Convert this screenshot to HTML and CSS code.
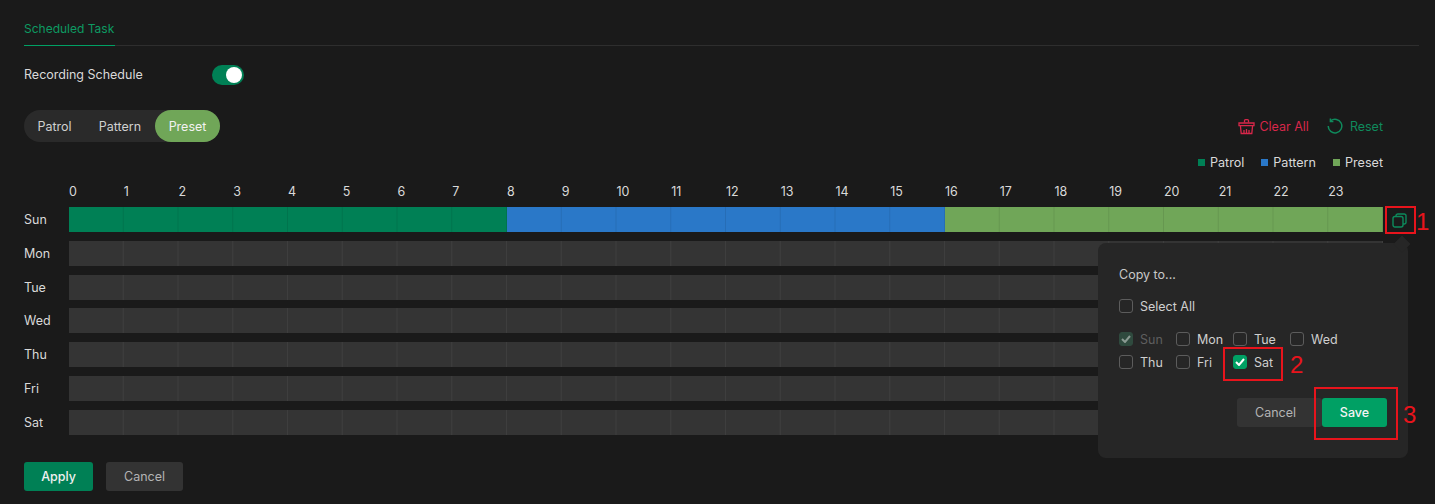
FILE: index.html
```html
<!DOCTYPE html>
<html lang="en">
<head>
  <meta charset="UTF-8" />
  <title>Scheduled Task</title>
  <link rel="stylesheet" href="styles.css">
</head>
<body>
  <div class="page">
    <div class="tabs"><span class="tab-active">Scheduled Task</span></div>

    <div class="switch-row">
      <span class="switch-label">Recording Schedule</span>
      <span class="switch"><span class="switch-knob"></span></span>
    </div>

    <div class="toolbar">
      <div class="mode-group">
        <span class="mode">Patrol</span>
        <span class="mode">Pattern</span>
        <span class="mode mode-active">Preset</span>
      </div>
      <div class="actions">
        <span class="action action-clear">
          <svg width="17" height="17" viewBox="0 0 17 17" fill="none" stroke="currentColor" stroke-width="1.3">
            <path d="M6.5 4.5V2.6a1 1 0 0 1 1-1h2a1 1 0 0 1 1 1v1.9"/>
            <path d="M1 5h15v2.6H1z"/>
            <path d="M2.4 7.6l.8 7.9h10.6l.8-7.9"/>
            <path d="M6 12v3.5M8.5 11v4.5M11 12v3.5"/>
          </svg>
          Clear All
        </span>
        <span class="action action-reset">
          <svg width="16" height="16" viewBox="0 0 16 16" fill="none" stroke="currentColor" stroke-width="1.5">
            <path d="M3.6 2.9A6.8 6.8 0 1 1 1.2 8"/>
            <path d="M3.4 .4v3h3"/>
          </svg>
          Reset
        </span>
      </div>
    </div>

    <div class="legend">
      <span class="legend-item"><i class="dot patrol"></i>Patrol</span>
      <span class="legend-item"><i class="dot pattern"></i>Pattern</span>
      <span class="legend-item"><i class="dot preset"></i>Preset</span>
    </div>

    <div class="schedule">
      <div class="hours">
        <span>0</span><span>1</span><span>2</span><span>3</span><span>4</span><span>5</span>
        <span>6</span><span>7</span><span>8</span><span>9</span><span>10</span><span>11</span>
        <span>12</span><span>13</span><span>14</span><span>15</span><span>16</span><span>17</span>
        <span>18</span><span>19</span><span>20</span><span>21</span><span>22</span><span>23</span>
      </div>
      <div class="day-row">
        <span class="day">Sun</span>
        <div class="track track-filled">
          <div class="seg patrol"></div>
          <div class="seg pattern"></div>
          <div class="seg preset"></div>
        </div>
      </div>
      <div class="day-row"><span class="day">Mon</span><div class="track"></div></div>
      <div class="day-row"><span class="day">Tue</span><div class="track"></div></div>
      <div class="day-row"><span class="day">Wed</span><div class="track"></div></div>
      <div class="day-row"><span class="day">Thu</span><div class="track"></div></div>
      <div class="day-row"><span class="day">Fri</span><div class="track"></div></div>
      <div class="day-row"><span class="day">Sat</span><div class="track"></div></div>
    </div>

    <div class="footer">
      <button class="btn btn-apply">Apply</button>
      <button class="btn btn-cancel">Cancel</button>
    </div>
  </div>

  <!-- copy icon + its red callout -->
  <span class="copy-icon">
    <svg width="15" height="15" viewBox="0 0 15 15" fill="none" stroke="currentColor" stroke-width="1.4">
      <rect x="1" y="3.5" width="10" height="10.5" rx="2"/>
      <path d="M4 3.5V2.8A1.8 1.8 0 0 1 5.8 1h6.4A1.8 1.8 0 0 1 14 2.8v6.4a1.8 1.8 0 0 1-1.8 1.8H11"/>
    </svg>
  </span>
  <span class="mark mark-1"></span>
  <span class="mark-num num-1">1</span>

  <div class="popover">
    <span class="popover-arrow"></span>
    <p class="popover-title">Copy to...</p>
    <label class="check check-all"><i class="box"></i>Select All</label>
    <div class="check-grid">
      <label class="check check-disabled"><i class="box box-disabled"><svg width="10" height="8" viewBox="0 0 10 8"><path d="M1 4l3 3 5-6" fill="none" stroke="currentColor" stroke-width="2"/></svg></i>Sun</label>
      <label class="check"><i class="box"></i>Mon</label>
      <label class="check"><i class="box"></i>Tue</label>
      <label class="check"><i class="box"></i>Wed</label>
      <label class="check"><i class="box"></i>Thu</label>
      <label class="check"><i class="box"></i>Fri</label>
      <label class="check"><i class="box box-on"><svg width="10" height="8" viewBox="0 0 10 8"><path d="M1 4l3 3 5-6" fill="none" stroke="currentColor" stroke-width="2"/></svg></i>Sat</label>
    </div>
    <div class="popover-btns">
      <button class="btn btn-pop-cancel">Cancel</button>
      <button class="btn btn-save">Save</button>
    </div>
  </div>
  <span class="mark mark-2"></span>
  <span class="mark-num num-2">2</span>
  <span class="mark mark-3"></span>
  <span class="mark-num num-3">3</span>
</body>
</html>
```

FILE: styles.css
```css
:root {
  --bg: #1a1a1a;
  --panel: #262626;
  --green: #00a064;
  --patrol: #008055;
  --pattern: #2a78c8;
  --preset: #70a658;
  --text: #d9d9d9;
  --red: #e8141c;
}

* {
  box-sizing: border-box;
}

html, body {
  height: 100%;
}

body {
  margin: 0;
  background-color: var(--bg);
  color: var(--text);
  font-family: Inter, "Open Sans", sans-serif;
  font-size: 12.5px;
  overflow: hidden;
  position: relative;
}

.page {
  padding: 0 16px 0 24px;
}

.tabs {
  height: 46px;
  padding-top: 21px;
  border-bottom: 1px solid #2e2e2e;
  display: flex;
}

.tab-active {
  color: #0d9a62;
  font-size: 12px;
  height: 25px;
  border-bottom: 1px solid var(--green);
  margin-bottom: -1px;
  width: 91px;
  white-space: nowrap;
}

.switch-row {
  display: flex;
  align-items: center;
  height: 20px;
  margin-top: 19px;
}

.switch-label {
  width: 188px;
  padding-bottom: 2px;
}

.switch {
  width: 32px;
  height: 20px;
  border-radius: 10px;
  background-color: var(--patrol);
  display: flex;
  align-items: center;
  justify-content: flex-end;
  padding-right: 2px;
}

.switch-knob {
  width: 16px;
  height: 16px;
  border-radius: 50%;
  background-color: #fff;
}

.toolbar {
  display: flex;
  justify-content: space-between;
  align-items: center;
  margin-top: 25px;
  padding-right: 36px;
}

.mode-group {
  display: flex;
  height: 32px;
  width: 196px;
  border-radius: 16px;
  background-color: #2a2a2a;
}

.mode {
  display: flex;
  align-items: center;
  justify-content: center;
  color: #d0d0d0;
}

.mode:nth-child(1) {
  width: 61px;
}

.mode:nth-child(2) {
  width: 70px;
}

.mode-active {
  width: 65px;
  border-radius: 16px;
  background-color: var(--preset);
  color: #f2f2f2;
}

.actions {
  display: flex;
  gap: 18px;
}

.action {
  display: flex;
  align-items: center;
}

.action-clear {
  color: #d8274a;
  gap: 4px;
}

.action-reset {
  color: #0f8a5c;
  gap: 7px;
}

.legend {
  display: flex;
  justify-content: flex-end;
  gap: 17px;
  margin-top: 13px;
  padding-right: 36px;
  height: 14px;
  align-items: center;
  font-size: 12.6px;
}

.legend-item {
  display: flex;
  align-items: center;
  gap: 5px;
}

.dot {
  width: 7px;
  height: 7px;
}

.patrol {
  background-color: var(--patrol);
}

.pattern {
  background-color: var(--pattern);
}

.preset {
  background-color: var(--preset);
}

.schedule {
  margin-top: 15px;
  padding-left: 45px;
  padding-right: 36px;
}

.hours {
  display: grid;
  grid-template-columns: repeat(24, 1fr);
  height: 16px;
  line-height: 16px;
  margin-bottom: 7px;
}

.day-row {
  display: flex;
  height: 25px;
  margin-bottom: 8.8px;
  position: relative;
}

.day {
  position: absolute;
  left: -45px;
  top: 5px;
}

.track {
  position: relative;
  flex: 1;
  display: flex;
  background-color: #343434;
}

/* hour lines, one per cell */
.track::after {
  content: "";
  position: absolute;
  inset: 0;
  background-image: linear-gradient(to left, rgba(255, 255, 255, 0.05) 1px, transparent 1px);
  background-size: calc(100% / 24) 100%;
}

.track-filled::after {
  background-image: linear-gradient(to left, rgba(0, 0, 0, 0.09) 1px, transparent 1px);
}

.seg {
  flex: 1;
}

.footer {
  display: flex;
  gap: 13px;
  margin-top: 27px;
}

.btn {
  height: 29px;
  border: none;
  border-radius: 3px;
  font-family: inherit;
  font-size: 12.5px;
  padding: 0;
}

.btn-apply {
  width: 69px;
  background-color: var(--patrol);
  color: #f0f0f0;
  font-weight: 500;
}

.btn-cancel {
  width: 77px;
  background-color: #333;
  color: #b4b4b4;
}

.copy-icon {
  position: absolute;
  left: 1392px;
  top: 213px;
  color: #0d8a5c;
  display: flex;
}

.popover {
  position: absolute;
  left: 1098px;
  top: 243px;
  width: 310px;
  height: 215px;
  border-radius: 8px;
  background-color: var(--panel);
  padding: 24px 21px 0;
}

.popover-arrow {
  position: absolute;
  top: -5px;
  left: 298px;
  width: 12px;
  height: 12px;
  background-color: var(--panel);
  transform: rotate(45deg);
}

.popover-title {
  margin: 0;
  height: 16px;
  line-height: 16px;
  color: #c8c8c8;
}

.check {
  display: flex;
  align-items: center;
  gap: 7px;
  height: 16px;
  color: #cfcfcf;
}

.check-all {
  margin-top: 15px;
}

.check-grid {
  display: grid;
  grid-template-columns: repeat(4, 57px);
  row-gap: 7px;
  margin-top: 17px;
}

.box {
  width: 14px;
  height: 14px;
  border: 1px solid #5c5c5c;
  border-radius: 3px;
  display: flex;
  align-items: center;
  justify-content: center;
}

.box-disabled {
  background-color: #2f4a3e;
  border-color: #2f4a3e;
  color: #8a9a92;
}

.box-on {
  background-color: var(--green);
  border-color: var(--green);
  color: #fff;
}

.check-disabled {
  color: #5e5e5e;
}

.popover-btns {
  display: flex;
  justify-content: flex-end;
  margin-top: 28px;
}

.btn-pop-cancel {
  width: 85px;
  padding-right: 8px;
  background-color: #333;
  color: #b4b4b4;
}

.btn-save {
  width: 65px;
  background-color: var(--green);
  color: #f4f4f4;
  font-weight: 500;
}

/* red callouts drawn over the screenshot */
.mark {
  position: absolute;
  border: 2px solid var(--red);
}

.mark-1 {
  left: 1385px;
  top: 206px;
  width: 31px;
  height: 28px;
}

.mark-2 {
  left: 1223px;
  top: 347px;
  width: 60px;
  height: 34px;
}

.mark-3 {
  left: 1314px;
  top: 387px;
  width: 84px;
  height: 53px;
}

.mark-num {
  position: absolute;
  color: var(--red);
  font-family: "Liberation Sans", sans-serif;
  font-size: 24px;
  line-height: 28px;
}

.num-1 {
  left: 1416px;
  top: 208px;
}

.num-2 {
  left: 1290px;
  top: 351px;
}

.num-3 {
  left: 1403px;
  top: 401px;
}
```
